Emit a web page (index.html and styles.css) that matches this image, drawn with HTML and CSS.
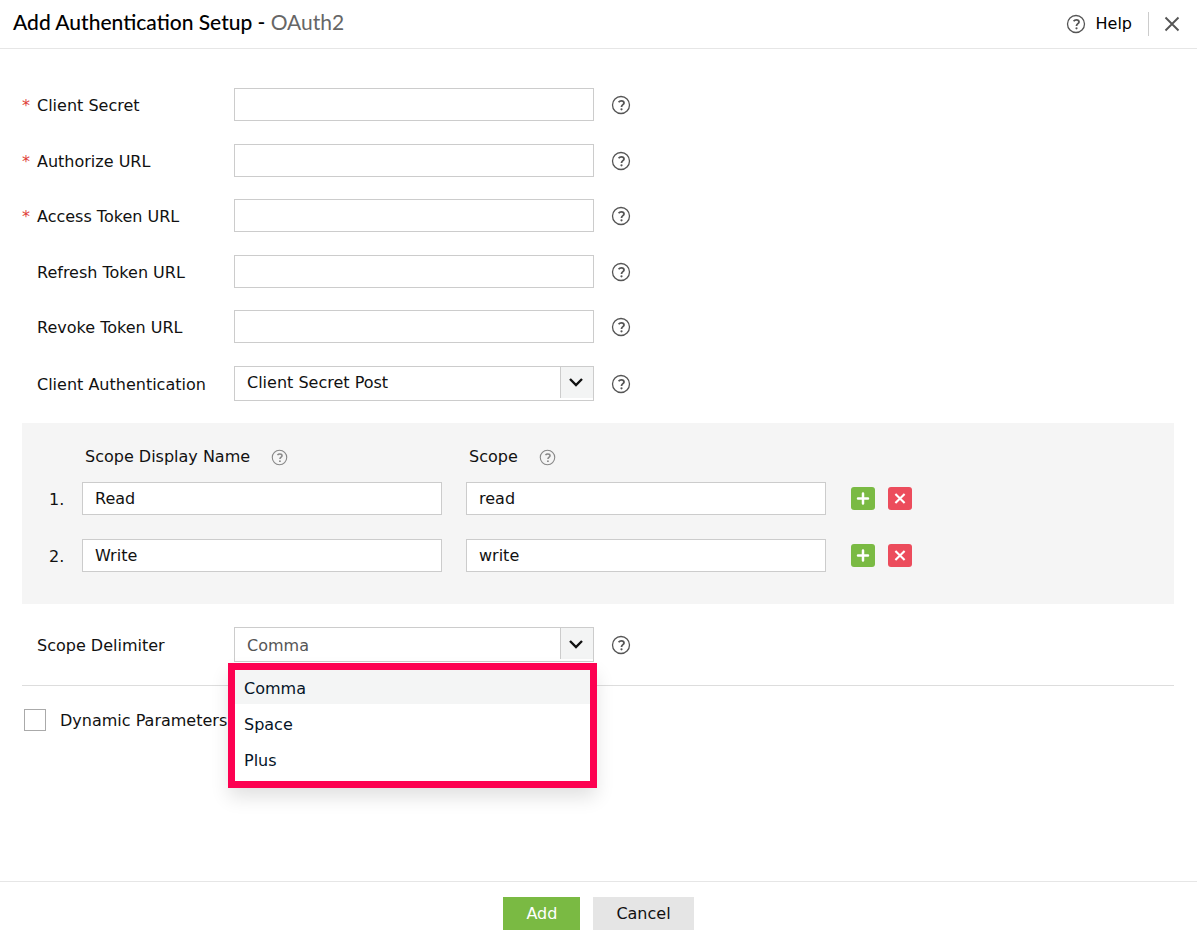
FILE: index.html
```html
<!DOCTYPE html>
<html lang="en">
<head>
<meta charset="utf-8">
<meta name="viewport" content="width=device-width, initial-scale=1">
<title>Add Authentication Setup - OAuth2</title>
<link rel="stylesheet" href="styles.css">
</head>
<body>
<svg class="defs" aria-hidden="true">
  <symbol id="help" viewBox="0 0 20 20">
    <circle cx="10" cy="10" r="8.5" fill="none" stroke="currentColor" stroke-width="1.3"/>
    <path d="M7.6 7.2Q8.6 5.9 10.3 5.9C12.1 5.9 13 6.7 13 7.9C13 9.7 10.5 9.6 10.5 11.9" fill="none" stroke="currentColor" stroke-width="1.8"/>
    <circle cx="10.5" cy="14.3" r="1.1" fill="currentColor"/>
  </symbol>
  <symbol id="chevron" viewBox="0 0 16 16">
    <path d="M2 5L8 11L14 5" fill="none" stroke="currentColor" stroke-width="2.4"/>
  </symbol>
  <symbol id="plus" viewBox="0 0 24 24">
    <path d="M12 6.8V17.2M6.8 12H17.2" fill="none" stroke="currentColor" stroke-width="2.6" stroke-linecap="round"/>
  </symbol>
  <symbol id="cross" viewBox="0 0 24 24">
    <path d="M7.2 7.2L16.8 16.8M16.8 7.2L7.2 16.8" fill="none" stroke="currentColor" stroke-width="2.2"/>
  </symbol>
</svg>

<header class="header">
  <h1 class="title">Add Authentication Setup - <span class="title-type">OAuth2</span></h1>
  <div class="header-actions">
    <a class="help-link" href="#help-page"><svg class="help-icon"><use href="#help"/></svg>Help</a>
    <button class="close" type="button" aria-label="Close">
      <svg class="close-icon" viewBox="0 0 16 16"><path d="M1.5 1.5L14.5 14.5M14.5 1.5L1.5 14.5" fill="none" stroke="currentColor" stroke-width="1.9"/></svg>
    </button>
  </div>
</header>

<form class="form">
  <div class="content">
    <div class="fields">
      <div class="row">
        <label class="label required" for="client-secret">Client Secret</label>
        <input class="input" id="client-secret" type="text">
        <button class="tip" type="button" aria-label="About Client Secret"><svg class="help-icon"><use href="#help"/></svg></button>
      </div>
      <div class="row">
        <label class="label required" for="authorize-url">Authorize URL</label>
        <input class="input" id="authorize-url" type="text">
        <button class="tip" type="button" aria-label="About Authorize URL"><svg class="help-icon"><use href="#help"/></svg></button>
      </div>
      <div class="row">
        <label class="label required" for="access-url">Access Token URL</label>
        <input class="input" id="access-url" type="text">
        <button class="tip" type="button" aria-label="About Access Token URL"><svg class="help-icon"><use href="#help"/></svg></button>
      </div>
      <div class="row">
        <label class="label" for="refresh-url">Refresh Token URL</label>
        <input class="input" id="refresh-url" type="text">
        <button class="tip" type="button" aria-label="About Refresh Token URL"><svg class="help-icon"><use href="#help"/></svg></button>
      </div>
      <div class="row">
        <label class="label" for="revoke-url">Revoke Token URL</label>
        <input class="input" id="revoke-url" type="text">
        <button class="tip" type="button" aria-label="About Revoke Token URL"><svg class="help-icon"><use href="#help"/></svg></button>
      </div>
      <div class="row">
        <label class="label" for="client-auth">Client Authentication</label>
        <div class="select-box">
          <select class="select" id="client-auth"><option>Client Secret Post</option></select>
          <span class="arrow"><svg class="arrow-icon"><use href="#chevron"/></svg></span>
        </div>
        <button class="tip" type="button" aria-label="About Client Authentication"><svg class="help-icon"><use href="#help"/></svg></button>
      </div>
    </div>

    <section class="scopes">
      <div class="scope-row scope-head">
        <span></span>
        <div class="scope-title" id="name-head">Scope Display Name <button class="tip tip-light" type="button" aria-label="About Scope Display Name"><svg class="help-icon small"><use href="#help"/></svg></button></div>
        <div class="scope-title" id="scope-head">Scope <button class="tip tip-light" type="button" aria-label="About Scope"><svg class="help-icon small"><use href="#help"/></svg></button></div>
      </div>
      <div class="scope-row">
        <span class="number">1.</span>
        <input class="input" type="text" value="Read" aria-labelledby="name-head">
        <input class="input" type="text" value="read" aria-labelledby="scope-head">
        <div class="scope-actions">
          <button class="square add-row" type="button" aria-label="Add scope"><svg class="square-icon"><use href="#plus"/></svg></button>
          <button class="square delete-row" type="button" aria-label="Delete scope"><svg class="square-icon"><use href="#cross"/></svg></button>
        </div>
      </div>
      <div class="scope-row">
        <span class="number">2.</span>
        <input class="input" type="text" value="Write" aria-labelledby="name-head">
        <input class="input" type="text" value="write" aria-labelledby="scope-head">
        <div class="scope-actions">
          <button class="square add-row" type="button" aria-label="Add scope"><svg class="square-icon"><use href="#plus"/></svg></button>
          <button class="square delete-row" type="button" aria-label="Delete scope"><svg class="square-icon"><use href="#cross"/></svg></button>
        </div>
      </div>
    </section>

    <div class="row delimiter">
      <label class="label" for="delimiter">Scope Delimiter</label>
      <div class="select-box">
        <select class="select muted" id="delimiter"><option>Comma</option><option>Space</option><option>Plus</option></select>
        <span class="arrow"><svg class="arrow-icon"><use href="#chevron"/></svg></span>
        <div class="menu" role="listbox" aria-label="Scope Delimiter">
          <button class="option selected" type="button" role="option" aria-selected="true">Comma</button>
          <button class="option" type="button" role="option" aria-selected="false">Space</button>
          <button class="option" type="button" role="option" aria-selected="false">Plus</button>
        </div>
      </div>
      <button class="tip" type="button" aria-label="About Scope Delimiter"><svg class="help-icon"><use href="#help"/></svg></button>
    </div>

    <div class="dynamic">
      <input class="checkbox" id="dynamic" type="checkbox">
      <label class="check-label" for="dynamic">Dynamic Parameters</label>
    </div>
  </div>

  <footer class="footer">
    <button class="button primary" type="submit">Add</button>
    <button class="button" type="button">Cancel</button>
  </footer>
</form>
</body>
</html>
```
FILE: styles.css
```css
* {
  box-sizing: border-box;
}

body {
  display: flex;
  flex-direction: column;
  min-height: 100vh;
  margin: 0;
  background: #fff;
  color: #111;
  font: 16px/20px Verdana, "DejaVu Sans", sans-serif;
}

button,
input,
select {
  margin: 0;
  font: inherit;
  color: inherit;
}

button {
  padding: 0;
  border: 0;
  background: none;
  cursor: pointer;
}

svg {
  display: block;
}

.defs {
  position: absolute;
  width: 0;
  height: 0;
}

.header {
  display: flex;
  align-items: center;
  justify-content: space-between;
  height: 49px;
  padding: 0 17px 0 13px;
  border-bottom: 1px solid #e6e6e6;
}

.title {
  margin: 0;
  padding-bottom: 4px;
  color: #000;
  font: 500 21px/26px Lato, sans-serif;
}

.title-type {
  color: #666;
  font-weight: 400;
}

.header-actions {
  display: flex;
  align-items: center;
}

.help-link {
  display: flex;
  align-items: center;
  gap: 10px;
  padding-right: 16px;
  border-right: 1px solid #ccc;
  color: #000;
  line-height: 24px;
  text-decoration: none;
}

.help-icon {
  width: 20px;
  height: 20px;
  color: #555;
}

.help-icon.small {
  width: 17px;
  height: 17px;
  color: #888;
}

.close {
  padding-left: 15px;
  color: #555;
}

.close-icon {
  width: 16px;
  height: 16px;
}

.form {
  display: flex;
  flex: 1;
  flex-direction: column;
}

.content {
  flex: 1;
  padding: 39px 23px 22px 22px;
}

.fields {
  display: grid;
  align-content: space-between;
  min-height: 313px;
}

.row {
  display: grid;
  grid-template-columns: 197px 360px auto;
  align-items: center;
  padding-left: 15px;
}

.label {
  position: relative;
  padding-top: 3px;
}

.required::before {
  content: "*";
  position: absolute;
  left: -15px;
  color: #e0413a;
}

.input {
  width: 360px;
  height: 33px;
  padding: 0 12px;
  border: 1px solid #ccc;
  border-radius: 0;
  background: #fff;
}

.tip {
  justify-self: start;
  margin-left: 17px;
  padding-top: 1px;
}

.select-box {
  position: relative;
  display: grid;
  grid-template-columns: 1fr 34px;
  height: 35px;
}

.select {
  grid-area: 1 / 1 / 2 / 3;
  appearance: none;
  padding: 0 46px 0 12px;
  border: 1px solid #ccc;
  border-radius: 0;
  background: #fff;
}

.select.muted {
  padding-top: 2px;
  color: #555;
}

.arrow {
  display: grid;
  grid-area: 1 / 2;
  place-items: center;
  margin: 1px 1px 3px 0;
  padding-right: 2px;
  border-left: 1px solid #ccc;
  background: #f3f4f4;
  color: #111;
  pointer-events: none;
}

.arrow-icon {
  width: 16px;
  height: 16px;
}

.scopes {
  display: grid;
  gap: 24px;
  margin-top: 22px;
  padding: 24px 0 32px 22px;
  background: #f5f5f5;
}

.scope-row {
  display: grid;
  grid-template-columns: 38px 384px 385px auto;
  align-items: center;
}

.scope-head {
  margin-bottom: -9px;
}

.scope-title {
  display: flex;
  align-items: center;
  padding-left: 3px;
}

.tip-light {
  margin-left: 21px;
}

.number {
  padding: 2px 0 0 5px;
}

.scope-actions {
  display: flex;
  gap: 13px;
}

.square {
  border-radius: 3px;
  color: #fff;
}

.square-icon {
  width: 24px;
  height: 23px;
}

.add-row {
  background: #7aba43;
}

.delete-row {
  background: #ec4c5c;
}

.delimiter {
  margin-top: 23px;
}

.menu {
  position: absolute;
  z-index: 1;
  top: 41px;
  right: 2px;
  left: -1px;
  padding-bottom: 7px;
  background: #fff;
  outline: 7px solid #fd0151;
  outline-offset: -2px;
  box-shadow: 0 10px 18px 4px rgba(0, 0, 0, 0.12);
}

.option {
  display: block;
  width: 100%;
  padding: 11px 11px 5px;
  color: #051428;
  text-align: left;
}

.option.selected {
  background: #f4f5f5;
}

.dynamic {
  display: flex;
  align-items: center;
  gap: 14px;
  margin-top: 23px;
  padding: 23px 0 0 2px;
  border-top: 1px solid #ddd;
}

.checkbox {
  appearance: none;
  width: 22px;
  height: 22px;
  border: 1px solid #aaa;
  background: #fff;
}

.check-label {
  padding-top: 2px;
}

.footer {
  display: flex;
  justify-content: center;
  gap: 13px;
  padding: 15px 0 14px;
  border-top: 1px solid #e6e6e6;
}

.button {
  height: 33px;
  padding: 1px 23px 0;
  background: #e5e5e5;
  color: #111;
}

.button.primary {
  background: #7aba43;
  color: #fff;
}
```
